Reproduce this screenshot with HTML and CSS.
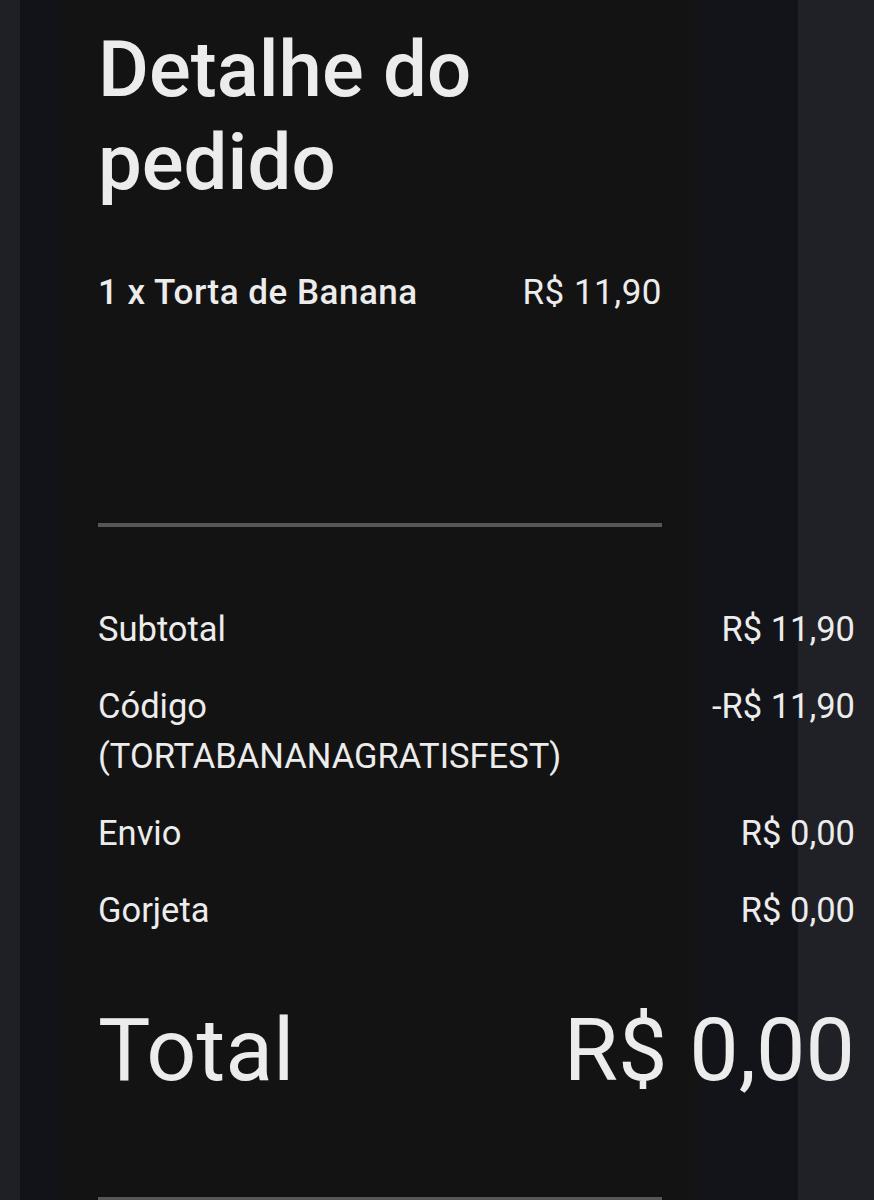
FILE: index.html
```html
<!DOCTYPE html>
<html lang="pt-BR">
<head>
<meta charset="utf-8">
<title>Detalhe do pedido</title>
<link rel="stylesheet" href="styles.css">
</head>
<body>
<main class="page">
  <h1 class="title">Detalhe do pedido</h1>
  <div class="item-row">
    <span class="item-name">1 x Torta de Banana</span>
    <span class="item-price">R$ 11,90</span>
  </div>
  <hr class="divider divider-top">
  <section class="summary">
    <div class="sum-row"><span class="sum-label">Subtotal</span><span class="sum-value">R$ 11,90</span></div>
    <div class="sum-row"><span class="sum-label">Código<br>(TORTABANANAGRATISFEST)</span><span class="sum-value">-R$ 11,90</span></div>
    <div class="sum-row"><span class="sum-label">Envio</span><span class="sum-value">R$ 0,00</span></div>
    <div class="sum-row"><span class="sum-label">Gorjeta</span><span class="sum-value">R$ 0,00</span></div>
  </section>
  <div class="total-row">
    <span class="total-label">Total</span>
    <span class="total-value">R$ 0,00</span>
  </div>
  <hr class="divider divider-bottom">
</main>
</body>
</html>
```

FILE: styles.css
```css
html, body {
  margin: 0;
  padding: 0;
}
body {
  width: 874px;
  height: 1200px;
  overflow: hidden;
  font-family: Roboto, "Liberation Sans", sans-serif;
  color: #ececec;
  background: linear-gradient(to right,
    #1f2025 0, #1f2025 20px,
    #121318 20px, #121318 60px,
    #131313 60px, #131313 690px,
    #151414 690px, #151414 700px,
    #131419 700px, #131419 798px,
    #202126 798px, #202126 874px);
}
.page {
  padding: 23px 19px 0 98px;
}
.title {
  margin: 0;
  width: 564px;
  font-size: 78px;
  font-weight: 500;
  line-height: 93px;
}
.item-row {
  width: 564px;
  margin-top: 64px;
  display: flex;
  justify-content: space-between;
  font-size: 35px;
  line-height: 40px;
  letter-spacing: 0.5px;
}
.item-name {
  font-weight: 500;
}
.item-price {
  font-weight: 400;
}
.divider {
  margin: 0;
  border: 0;
  width: 564px;
  height: 4px;
  background: #575757;
}
.divider-top {
  margin-top: 210px;
}
.summary {
  margin-top: 77px;
  display: flex;
  flex-direction: column;
  gap: 27px;
}
.sum-row {
  display: flex;
  justify-content: space-between;
  align-items: flex-start;
  font-size: 34.5px;
  line-height: 50px;
}
.total-row {
  margin-top: 65px;
  display: flex;
  justify-content: space-between;
  font-size: 88px;
  line-height: 100px;
}
.divider-bottom {
  margin-top: 97px;
}
```
